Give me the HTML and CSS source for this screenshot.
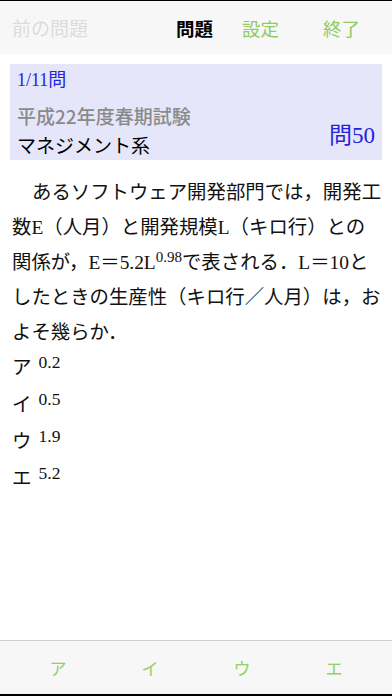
FILE: index.html
```html
<!DOCTYPE html>
<html lang="ja">
<head>
<meta charset="utf-8">
<title>問題</title>
<link rel="stylesheet" href="styles.css">
</head>
<body>
<div class="screen">
  <header class="nav">
    <span class="nav-prev">前の問題</span>
    <span class="nav-title">問題</span>
    <span class="nav-btn nav-settings">設定</span>
    <span class="nav-btn nav-end">終了</span>
  </header>
  <main class="main">
    <section class="info">
      <div class="info-left">
        <div class="count">1/11問</div>
        <div class="exam">平成22年度春期試験</div>
        <div class="category">マネジメント系</div>
      </div>
      <div class="qno">問50</div>
    </section>
    <p class="question"><span class="indent"></span>あるソフトウェア開発部門では，開発工<br>数E（人月）と開発規模L（キロ行）との<br>関係が，E＝5.2L<sup class="sup">0.98</sup>で表される．L＝10と<br>したときの生産性（キロ行／人月）は，お<br>よそ幾らか．</p>
    <ul class="choices">
      <li class="choice"><span class="kana">ア</span><span class="val">0.2</span></li>
      <li class="choice"><span class="kana">イ</span><span class="val">0.5</span></li>
      <li class="choice"><span class="kana">ウ</span><span class="val">1.9</span></li>
      <li class="choice"><span class="kana">エ</span><span class="val">5.2</span></li>
    </ul>
  </main>
  <footer class="toolbar">
    <span class="tool">ア</span>
    <span class="tool">イ</span>
    <span class="tool">ウ</span>
    <span class="tool">エ</span>
  </footer>
</div>
</body>
</html>
```

FILE: styles.css
```css
html, body {
  margin: 0;
  padding: 0;
  background: #fff;
}
body {
  font-family: "Noto Sans CJK JP", "Noto Sans", sans-serif;
}
.screen {
  width: 392px;
  height: 696px;
  display: flex;
  flex-direction: column;
  border-top: 1px solid #000;
  border-bottom: 2px solid #000;
  box-sizing: border-box;
}
.nav {
  height: 53px;
  background: #f7f7f7;
  display: flex;
  align-items: center;
  padding: 0 32px 0 12px;
  font-size: 18.5px;
  flex: none;
}
.nav-prev {
  color: #dcdcdc;
  font-size: 19px;
  flex: 1;
}
.nav-title {
  color: #000;
  font-weight: bold;
}
.nav-btn {
  color: #8fcb5d;
}
.nav-settings {
  margin-left: 29px;
}
.nav-end {
  margin-left: 44px;
}
.main {
  flex: 1;
  overflow: hidden;
}
.info {
  margin: 10px 10px 0 10px;
  background: #e6e6fa;
  height: 96px;
  box-sizing: border-box;
  padding: 2px 7px 0 7px;
  display: flex;
  justify-content: space-between;
  align-items: flex-end;
}
.info-left {
  display: flex;
  flex-direction: column;
  align-self: stretch;
}
.count {
  color: #2323dc;
  font-family: "Liberation Serif", "Noto Sans CJK JP", serif;
  font-size: 18px;
  line-height: 28px;
}
.exam {
  color: #8a8a8a;
  font-size: 19px;
  font-weight: 500;
  line-height: 28px;
  margin-top: 8px;
}
.category {
  color: #000;
  font-size: 19px;
  line-height: 28px;
  margin-top: 1px;
}
.qno {
  color: #2323dc;
  font-family: "Liberation Serif", "Noto Sans CJK JP", serif;
  font-size: 23px;
  line-height: 30px;
  margin-bottom: 9px;
}
.question {
  margin: 15px 0 0 0;
  padding: 0 12px;
  font-family: "Liberation Serif", "Noto Sans CJK JP", serif;
  font-size: 19.4px;
  line-height: 35px;
  color: #111;
  white-space: nowrap;
}
.indent {
  display: inline-block;
  width: 20px;
}
.sup {
  font-size: 15px;
  vertical-align: 7px;
  line-height: 0;
}
.choices {
  list-style: none;
  margin: -3px 0 0 0;
  padding: 0 12px;
}
.choice {
  height: 37px;
  display: flex;
  align-items: center;
  gap: 7px;
  color: #111;
}
.kana {
  font-size: 19.5px;
}
.val {
  font-family: "Liberation Serif", serif;
  font-size: 17.5px;
  position: relative;
  top: -3px;
}
.toolbar {
  flex: none;
  border-top: 1px solid #cfcfcf;
  background: #f7f7f7;
  display: grid;
  grid-template-columns: repeat(4, 1fr);
  padding: 0 12px;
  align-items: center;
  box-sizing: border-box;
  height: 54px;
}
.tool {
  text-align: center;
  color: #94cf62;
  font-size: 17px;
}
```
